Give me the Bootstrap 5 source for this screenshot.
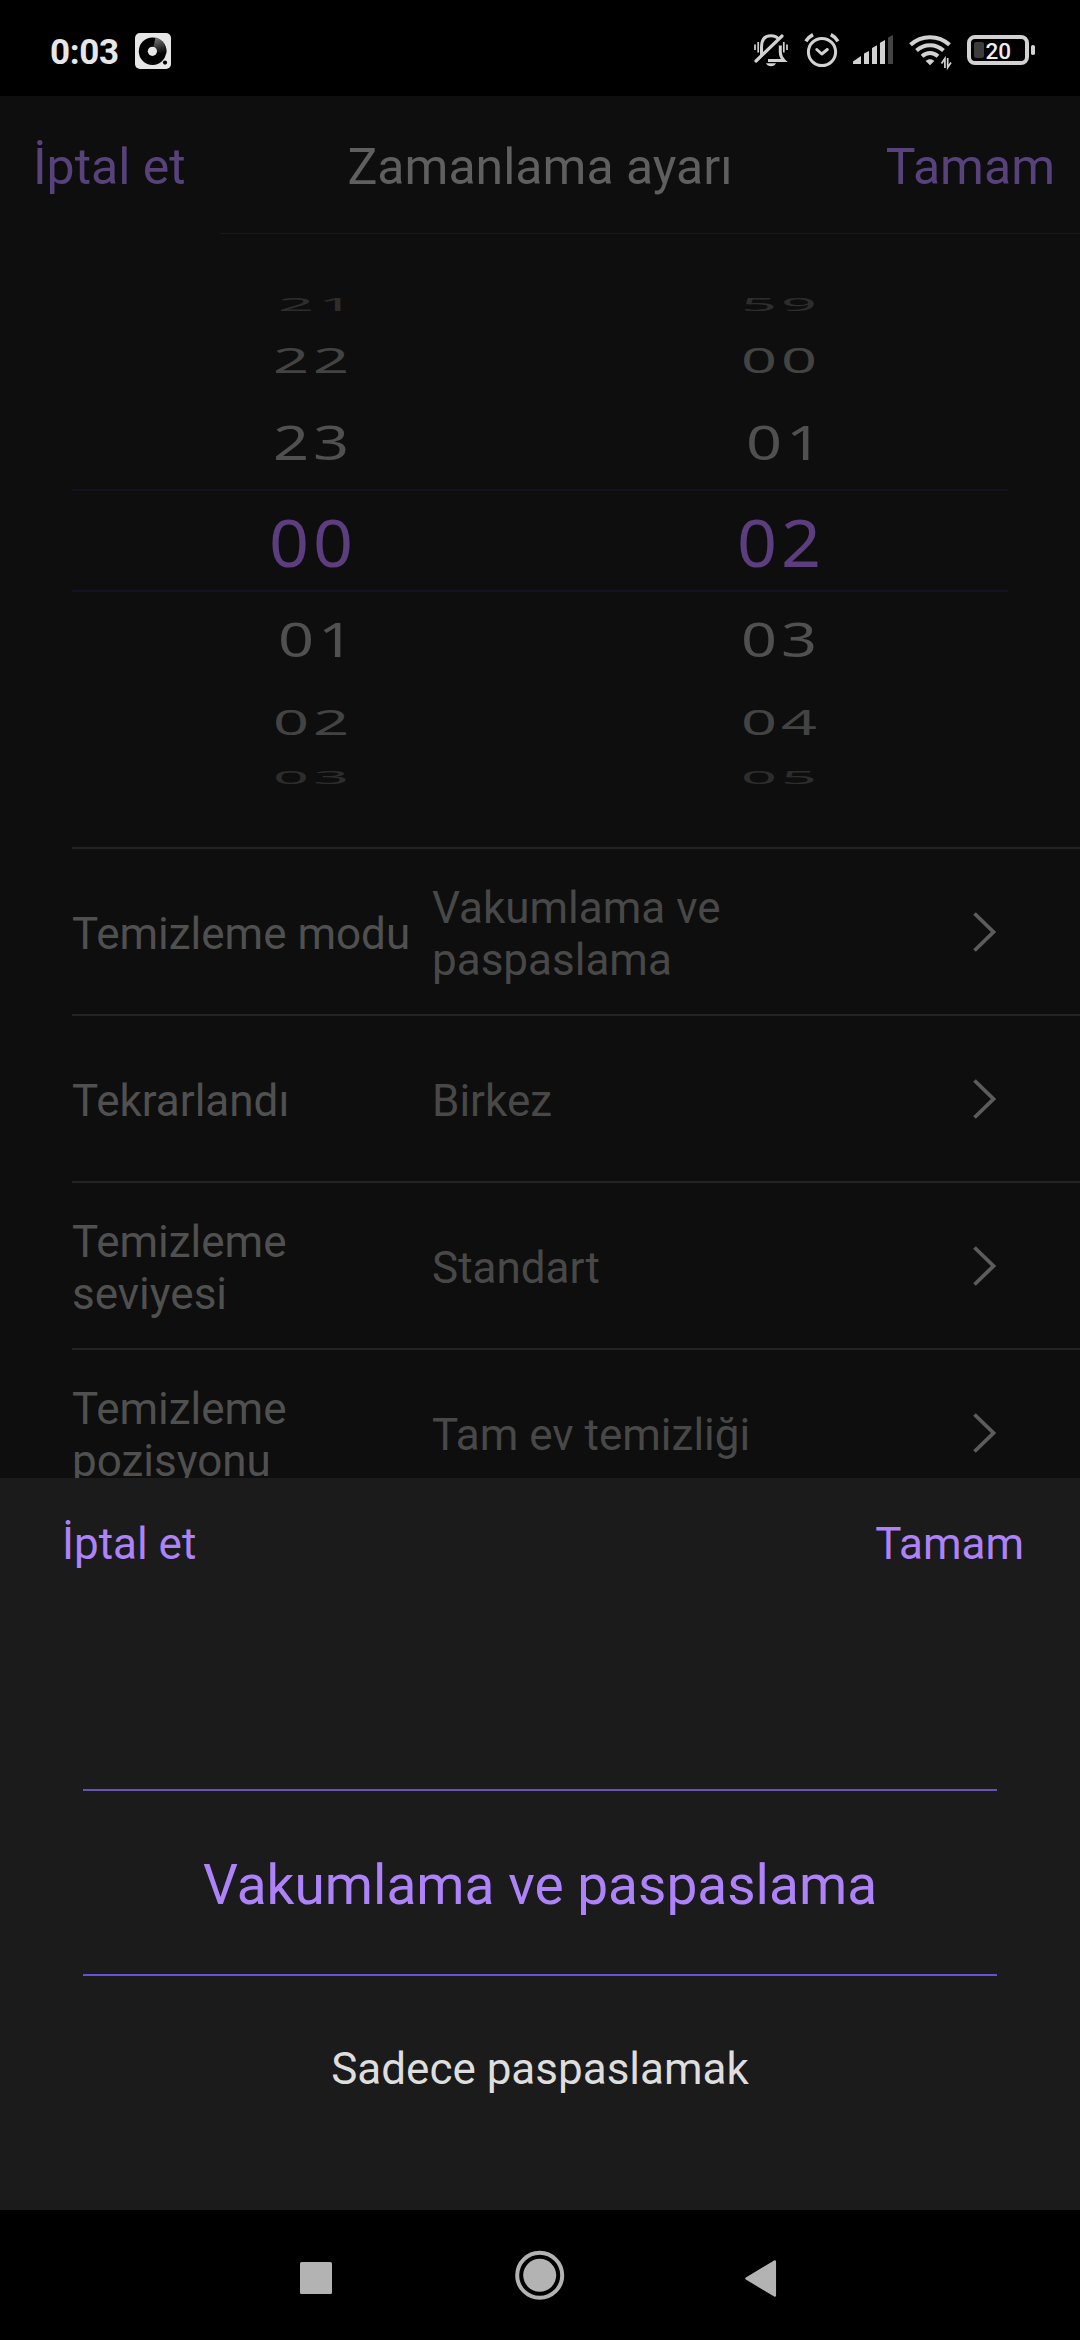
<!DOCTYPE html>
<html lang="tr">
<head>
<meta charset="utf-8">
<meta name="viewport" content="width=device-width, initial-scale=1">
<title>Zamanlama ayarı</title>
<link href="https://cdn.jsdelivr.net/npm/bootstrap@5.3.0/dist/css/bootstrap.min.css" rel="stylesheet">
<script src="https://cdn.jsdelivr.net/npm/bootstrap@5.3.0/dist/js/bootstrap.bundle.min.js" defer></script>
<style>
body{font-family:Roboto,"Noto Sans",sans-serif;background:#000;color:#dedede}
.screen{width:1080px;height:2340px}
svg{display:block;overflow:visible;flex:none}
.status-bar{height:96px;padding:6px 43px 0 50px}
.clock{font-size:35px;font-weight:700;line-height:40px;letter-spacing:-.3px;padding-top:3px;color:#e6e6e6;width:85px}
.tray{gap:12px}

.app-view{height:1382px;background:#0e0e0e}
.app-header{height:137px;padding-top:5px;font-size:50px;line-height:60px}
.app-header button{flex:1 1 100px;color:#58427b}
.app-header .cancel{padding-left:33px}
.app-header .confirm{padding-right:25px}
.app-title{color:#5f5f5f;font-size:50px;line-height:60px;font-weight:400}
.header-rule{height:1px;margin-left:220px;background:#191919}

.time-picker{height:613px;padding:50px 72px 0}
.wheel-half{width:50%}
.wheel-item{font-family:"Noto Sans",sans-serif;font-size:63px;line-height:1;letter-spacing:4px;padding-left:14px;color:#505050}
.wheel-item.has-one{padding-left:24px}
.wheel-item span{display:block}
.far-top,.far-end{height:40px;color:#2d2d2d}
.far-top span,.far-end span{transform:scaleY(.3) translateY(-2px)}
.mid-top{height:72px}
.mid-end{height:70px}
.mid-top,.mid-end{color:#434343}
.mid-top span,.mid-end span{transform:scaleY(.56) translateY(-2px)}
.near-top{height:93px}
.near-end{height:95px}
.near-top span,.near-end span{transform:scaleY(.755) translateY(-1px)}
.chosen{height:103px;font-size:70px;color:#5c3d7e;border-top:2px solid #151222;border-bottom:2px solid #151222}
.chosen span{transform:scaleY(.93) translateY(1px)}

.options{margin-left:72px;font-size:44px;line-height:52px}
.option{height:167px;border-top:2px solid #242424;padding-right:83px}
.option .label-text{width:360px;padding:5px 12px 0 0;color:#505050}
.option .value-text{width:400px;padding-top:5px;color:#484848}

.sheet{height:732px;background:#1b1b1b;font-size:44px;line-height:52px}
.sheet-actions{height:131px;padding:0 56px 0 62px}
.sheet-actions button,.sheet-chosen{color:#ae83fa}
.sheet-wheel{margin:180px 83px 0}
.sheet-chosen{height:187px;padding-top:5px;font-size:55px;line-height:64px;border-top:2px solid #6753b3;border-bottom:2px solid #6751d6}
.sheet-next{height:185px;color:#dedede}
.plain{background:none;border:0;padding:0;font:inherit}
.nav-keys{height:130px}
</style>
</head>
<body>
<div class="screen d-flex flex-column overflow-hidden">

  <header class="status-bar d-flex align-items-center justify-content-between">
    <div class="d-flex align-items-center">
      <span class="clock">0:03</span>
      <svg width="36" height="36" viewBox="135 33 36 36">
        <defs><linearGradient id="shine" x1="156" y1="38" x2="161" y2="54" gradientUnits="userSpaceOnUse"><stop offset="0" stop-color="#777"/><stop offset="1" stop-color="#000"/></linearGradient></defs>
        <rect x="135" y="33" width="36" height="36" rx="5" fill="#e6e6e6"/>
        <circle cx="152.5" cy="51.3" r="13.7" fill="#000"/>
        <path d="M152.5 51.3L155.5 37.5A14 14 0 0 1 166.2 54Z" fill="url(#shine)"/>
        <circle cx="152.4" cy="51.3" r="4.6" fill="#e6e6e6"/>
        <circle cx="165" cy="62.6" r="2.1" fill="#000"/>
      </svg>
    </div>
    <div class="tray d-flex align-items-center">
      <svg width="38" height="40" viewBox="752 32 38 40" fill="none" stroke="#d2d2d2" stroke-width="3">
        <path d="M761.500 56V48C761.500 40.500 765 36.700 771 36.700C774.500 36.700 777 37.800 778.500 40M780.300 46.500V53C780.300 57 782 59.500 784 61.500H768"/>
        <path d="M756 62L782 37" stroke-width="3.200" stroke-linecap="round"/>
        <path d="M755 45.500V51M758.200 43V53.500M783.800 43V53.500M787 45.500V51" stroke-width="1.700"/>
        <path d="M766 64.200H776C775 66.300 773.500 67.200 771 67.200S767 66.300 766 64.200Z" fill="#d2d2d2" stroke="none"/>
      </svg>
      <svg width="39" height="40" viewBox="802 32 39 40" fill="none" stroke="#d2d2d2" stroke-width="3">
        <circle cx="822" cy="53" r="13.600"/>
        <path d="M816.800 50.500L821.800 55L827.300 50.500" stroke-linecap="round" stroke-linejoin="round"/>
        <path d="M805.800 42.300C807.500 39.600 810 37.300 813 35.700M830.800 35.700C834 37.300 836.300 39.600 837.900 42.300" stroke-width="3.600"/>
      </svg>
      <svg width="43" height="40" viewBox="853 32 43 40" fill="#d2d2d2">
        <path d="M853 65V62.500L861 57V65ZM864 65V54.500L869 52V65ZM872 65V49L877 46.300V65ZM880 65V43.700L885 41V65Z"/>
        <path d="M888 65V38.500L893 36V65Z" fill="#444"/>
      </svg>
      <svg width="45" height="40" viewBox="908 32 45 40" fill="none" stroke="#d2d2d2" stroke-width="4">
        <path d="M910.500 45.800C921.500 35.600 938.500 35.600 949.500 45.800M916.500 51.500C924.500 44.400 935.500 44.400 943.500 51.500M922 57.200C927 53 933 53 938 57.200"/>
        <path d="M925.700 61.900C928.300 59.700 931.700 59.700 934.300 61.900L930 66.200Z" fill="#d2d2d2" stroke="none"/>
        <path d="M944.900 69V59.500L941.500 64.500M947.700 59V68.500L951 63.500" stroke-width="1.700"/>
      </svg>
      <svg width="72" height="40" viewBox="965 32 72 40">
        <rect x="969" y="38" width="58" height="26" rx="6" fill="none" stroke="#d2d2d2" stroke-width="4"/>
        <rect x="974" y="43" width="10" height="16" rx="2" fill="#3c3c3c"/>
        <rect x="1031" y="46" width="4" height="10" rx="1.800" fill="#d2d2d2"/>
        <text x="985.500" y="60" font-size="22.500" font-weight="500" fill="#eee">20</text>
      </svg>
    </div>
  </header>

  <main class="app-view overflow-hidden flex-shrink-0">
    <div class="app-header d-flex align-items-center">
      <button class="plain cancel text-start">İptal et</button>
      <h1 class="app-title m-0">Zamanlama ayarı</h1>
      <button class="plain confirm text-end">Tamam</button>
    </div>
    <div class="header-rule"></div>

    <section class="time-picker d-flex text-center">
      <div class="wheel-half">
        <div class="wheel-item far-top has-one d-flex align-items-center justify-content-center"><span>21</span></div>
        <div class="wheel-item mid-top d-flex align-items-center justify-content-center"><span>22</span></div>
        <div class="wheel-item near-top d-flex align-items-center justify-content-center"><span>23</span></div>
        <div class="wheel-item chosen d-flex align-items-center justify-content-center"><span>00</span></div>
        <div class="wheel-item near-end has-one d-flex align-items-center justify-content-center"><span>01</span></div>
        <div class="wheel-item mid-end d-flex align-items-center justify-content-center"><span>02</span></div>
        <div class="wheel-item far-end d-flex align-items-center justify-content-center"><span>03</span></div>
      </div>
      <div class="wheel-half">
        <div class="wheel-item far-top d-flex align-items-center justify-content-center"><span>59</span></div>
        <div class="wheel-item mid-top d-flex align-items-center justify-content-center"><span>00</span></div>
        <div class="wheel-item near-top has-one d-flex align-items-center justify-content-center"><span>01</span></div>
        <div class="wheel-item chosen d-flex align-items-center justify-content-center"><span>02</span></div>
        <div class="wheel-item near-end d-flex align-items-center justify-content-center"><span>03</span></div>
        <div class="wheel-item mid-end d-flex align-items-center justify-content-center"><span>04</span></div>
        <div class="wheel-item far-end d-flex align-items-center justify-content-center"><span>05</span></div>
      </div>
    </section>

    <section class="options">
      <div class="option d-flex align-items-center">
        <div class="label-text text-nowrap">Temizleme modu</div><div class="value-text">Vakumlama ve paspaslama</div>
        <svg class="ms-auto" width="24" height="42" viewBox="0 0 24 42" fill="none" stroke="#5c5c5c" stroke-width="3.800"><path d="M1.500 2.500L20.500 21L1.500 39.500"/></svg>
      </div>
      <div class="option d-flex align-items-center">
        <div class="label-text">Tekrarlandı</div><div class="value-text">Birkez</div>
        <svg class="ms-auto" width="24" height="42" viewBox="0 0 24 42" fill="none" stroke="#5c5c5c" stroke-width="3.800"><path d="M1.500 2.500L20.500 21L1.500 39.500"/></svg>
      </div>
      <div class="option d-flex align-items-center">
        <div class="label-text">Temizleme seviyesi</div><div class="value-text">Standart</div>
        <svg class="ms-auto" width="24" height="42" viewBox="0 0 24 42" fill="none" stroke="#5c5c5c" stroke-width="3.800"><path d="M1.500 2.500L20.500 21L1.500 39.500"/></svg>
      </div>
      <div class="option d-flex align-items-center">
        <div class="label-text">Temizleme pozisyonu</div><div class="value-text">Tam ev temizliği</div>
        <svg class="ms-auto" width="24" height="42" viewBox="0 0 24 42" fill="none" stroke="#5c5c5c" stroke-width="3.800"><path d="M1.500 2.500L20.500 21L1.500 39.500"/></svg>
      </div>
    </section>
  </main>

  <section class="sheet flex-shrink-0 overflow-hidden">
    <div class="sheet-actions d-flex align-items-center justify-content-between">
      <button class="plain">İptal et</button>
      <button class="plain">Tamam</button>
    </div>
    <div class="sheet-wheel">
      <div class="sheet-chosen d-flex align-items-center justify-content-center">Vakumlama ve paspaslama</div>
      <div class="sheet-next d-flex align-items-center justify-content-center">Sadece paspaslamak</div>
    </div>
  </section>

  <nav class="nav-keys d-flex justify-content-center">
    <svg width="480" height="130" viewBox="300 2210 480 130" fill="#b3b3b3">
      <rect x="300" y="2262" width="32" height="32" rx="1.500"/>
      <circle cx="539.700" cy="2275.300" r="16.500"/>
      <circle cx="539.700" cy="2275.300" r="22.500" fill="none" stroke="#b3b3b3" stroke-width="4"/>
      <path d="M774.800 2261.500V2295.500L746.500 2278.500Z" stroke="#b3b3b3" stroke-width="2.500" stroke-linejoin="round"/>
    </svg>
  </nav>
</div>
</body>
</html>
